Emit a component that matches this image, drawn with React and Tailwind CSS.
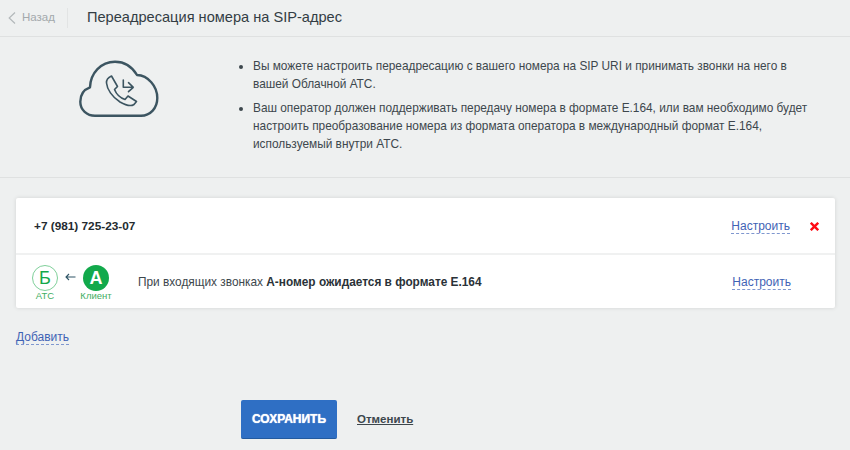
import React from "react";

function CloudIcon() {
  return (
    <svg width="80" height="58" viewBox="0 0 80 58" fill="none" stroke="#3c5561" strokeWidth="2.4" strokeLinecap="round" strokeLinejoin="round">
      <path d="M16 55.7 H62 C71.5 55.7 78.3 48 78.3 38 C78.3 26 69 15.5 58 15 C53 6.5 45 1.7 36 1.7 C22 1.7 11.5 13 11 27.3 C5 29.5 1.3 35 1.3 41.7 C1.3 50 8 55.7 16 55.7 Z" />
      <path strokeWidth="1.6" d="M32.5 16 L38.5 26.5 L35.5 29.5 C37.5 34.5 41.5 38 46 39.5 L49 36 L57.5 41.5 L55 44.5 C52 46.5 47 45.5 41 42 C33 37 28 29 27.5 23 C27.3 20 29 17.5 32.5 16 Z" />
      <path strokeWidth="1.6" d="M44.3 20 V27.3 H54.3 M49.5 22.7 L54.3 27.3 L49.5 31.7" />
    </svg>
  );
}

function DashedLink({ children, className = "" }) {
  return (
    <a className={`text-[#3f63b5] text-[12px] leading-[14px] border-b border-dashed border-[#7f97cf] ${className}`}>
      {children}
    </a>
  );
}

export default function App() {
  return (
    <div className="w-[850px] h-[450px] overflow-hidden bg-[#eef0f0] text-[#333d44] font-['Liberation_Sans',Arial,sans-serif]">
      <div className="h-[37px] flex items-center border-b border-[#dfe1e1]">
        <div className="w-[68px] h-[20px] flex items-center pl-[8px] gap-[6px] border-r border-[#e2e4e4] text-[#a3a9ac] text-[11.5px]">
          <svg width="8" height="12" viewBox="0 0 8 12" fill="none" stroke="#b3b8ba" strokeWidth="1.2">
            <path d="M7 0.5 L1.2 6 L7 11.5" />
          </svg>
          <span>Назад</span>
        </div>
        <h1 className="ml-[19px] text-[14.6px] text-[#333d44]">Переадресация номера на SIP-адрес</h1>
      </div>

      <div className="h-[141px] flex border-b border-[#dfe1e1]">
        <div className="w-[239px] pl-[79px] pt-[23px] shrink-0">
          <CloudIcon />
        </div>
        <ul className="w-[580px] pt-[20px] text-[11.85px] leading-[18px] text-[#3d474d] list-disc pl-[14px] flex flex-col gap-[6px]">
          <li>Вы можете настроить переадресацию с вашего номера на SIP URI и принимать звонки на него в вашей Облачной АТС.</li>
          <li>Ваш оператор должен поддерживать передачу номера в формате E.164, или вам необходимо будет настроить преобразование номера из формата оператора в международный формат E.164, используемый внутри АТС.</li>
        </ul>
      </div>

      <div className="mx-[16px] mt-[20px] w-[819px] h-[110px] bg-white rounded-[2px] shadow-[0_0_4px_rgba(0,0,0,0.12)] flex flex-col">
        <div className="h-[57px] pt-[2px] flex items-center border-b-2 border-[#f0f1f1] pl-[18px] pr-[16px]">
          <span className="text-[11.8px] font-bold text-[#242b30] flex-1">+7 (981) 725-23-07</span>
          <DashedLink>Настроить</DashedLink>
          <svg className="ml-[20px]" width="9" height="9" viewBox="0 0 9 9" stroke="#ff0a14" strokeWidth="2.4">
            <path d="M0.8 0.8 L8.2 8.2 M8.2 0.8 L0.8 8.2" />
          </svg>
        </div>
        <div className="flex-1 flex items-center pl-[16px] pt-[1px]">
          <div className="flex flex-col items-center w-[26px] text-[#3fae62] text-[9.5px] leading-[9px]">
            <span className="w-[26px] h-[26px] shrink-0 rounded-full border border-[#7fd09a] flex items-center justify-center text-[#14a84b] text-[18px] leading-none">Б</span>
            <span>АТС</span>
          </div>
          <svg className="ml-[7px] mb-[11px]" width="11" height="8" viewBox="0 0 11 8" fill="none" stroke="#2f5566" strokeWidth="1.1">
            <path d="M10.5 4 H1 M4 1 L1 4 L4 7" />
          </svg>
          <div className="ml-[3px] flex flex-col items-center w-[34px] text-[#3fae62] text-[9.5px] leading-[9px]">
            <span className="w-[26px] h-[26px] shrink-0 rounded-full bg-[#12a94b] flex items-center justify-center text-white text-[18px] font-bold leading-none">А</span>
            <span className="whitespace-nowrap">Клиент</span>
          </div>
          <p className="ml-[25px] mt-[1px] flex-1 text-[11.85px] text-[#3d474d]">
            При входящих звонках <b className="text-[#2a3238]">А-номер ожидается в формате E.164</b>
          </p>
          <DashedLink className="mr-[44px]">Настроить</DashedLink>
        </div>
      </div>

      <div className="mt-[16px] ml-[16px] h-[16px]">
        <DashedLink>Добавить</DashedLink>
      </div>

      <div className="mt-[60px] ml-[241px] flex items-center">
        <button className="w-[96px] h-[39px] bg-[#2f6fc4] rounded-[2px] border-b border-[#235a9f] text-white text-[12px] font-bold [text-shadow:0_0_1px_#fff]">СОХРАНИТЬ</button>
        <a className="ml-[20px] text-[11.5px] font-bold text-[#3d474d] underline">Отменить</a>
      </div>
    </div>
  );
}
